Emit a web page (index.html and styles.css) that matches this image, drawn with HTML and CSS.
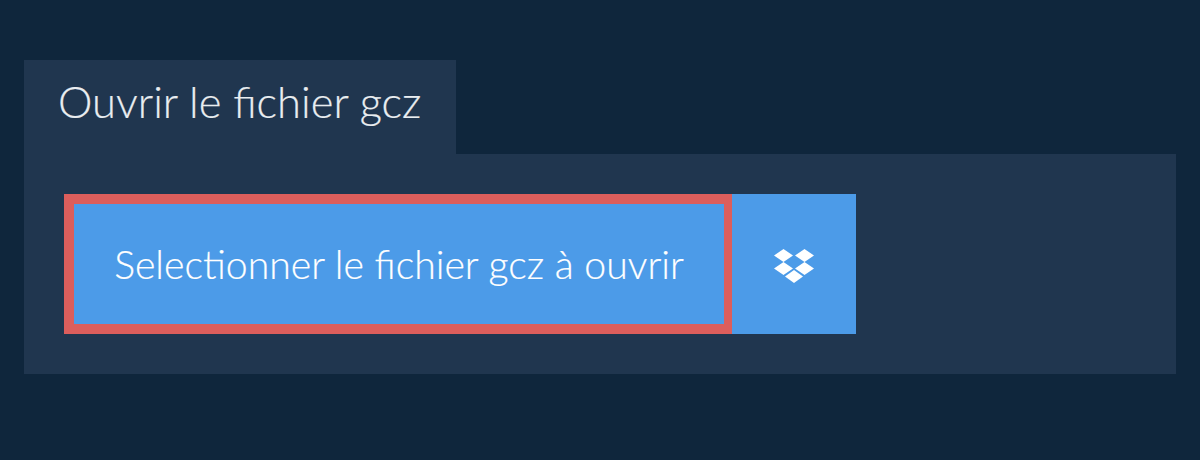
FILE: index.html
```html
<!DOCTYPE html>
<html lang="fr">
<head>
<meta charset="utf-8">
<title>Ouvrir le fichier gcz</title>
<link rel="stylesheet" href="styles.css">
</head>
<body>
<main class="page">
  <h1 class="tab">Ouvrir le fichier gcz</h1>
  <section class="panel">
    <div class="actions">
      <button class="select" type="button">Selectionner le fichier gcz à ouvrir</button>
      <button class="dropbox" type="button" aria-label="Dropbox">
        <svg class="dropbox-icon" viewBox="0 0 40 34" width="40" height="34" aria-hidden="true">
          <path d="M9.5 0 19 6.5 9.5 13 0 6.5Z"/>
          <path d="M30.5 0 40 6.5 30.5 13 21 6.5Z"/>
          <path d="M9.5 13 19 19.5 9.5 26 0 19.5Z"/>
          <path d="M30.5 13 40 19.5 30.5 26 21 19.5Z"/>
          <path d="M20 21 29 27.5 20 34 11 27.5Z"/>
        </svg>
      </button>
    </div>
  </section>
</main>
</body>
</html>
```
FILE: styles.css
```css
* { box-sizing: border-box; }
html, body { margin: 0; height: 100%; }
body {
  background: #0f263c;
  font-family: "Lato", "Liberation Sans", sans-serif;
  font-weight: 300;
  overflow: hidden;
}
.page {
  padding: 60px 24px 0;
}
.tab {
  display: inline-block;
  vertical-align: top;
  margin: 0;
  height: 94px;
  width: 432px;
  padding: 0 0 0 34px;
  background: #20364f;
  color: #e9edf0;
  font-size: 43.5px;
  font-weight: 300;
  line-height: 82px;
  white-space: nowrap;
  -webkit-text-stroke: 0.2px #e9edf0;
}
.panel {
  height: 220px;
  padding: 40px;
  background: #20364f;
}
.actions {
  display: flex;
  height: 140px;
}
button {
  margin: 0;
  font: inherit;
  color: #fff;
  background: #4c9be8;
  cursor: pointer;
}
.select {
  width: 668px;
  border-style: solid;
  border-color: #dc5e5c;
  border-width: 10px 8px 10px 10px;
  padding: 0 0 2px;
  font-size: 39.2px;
  font-weight: 300;
  white-space: nowrap;
  -webkit-text-stroke: 0.2px #fff;
}
.dropbox {
  width: 124px;
  border: 0;
  padding: 4px 0 0;
  display: flex;
  align-items: center;
  justify-content: center;
}
.dropbox-icon {
  display: block;
  fill: #fff;
}
```
